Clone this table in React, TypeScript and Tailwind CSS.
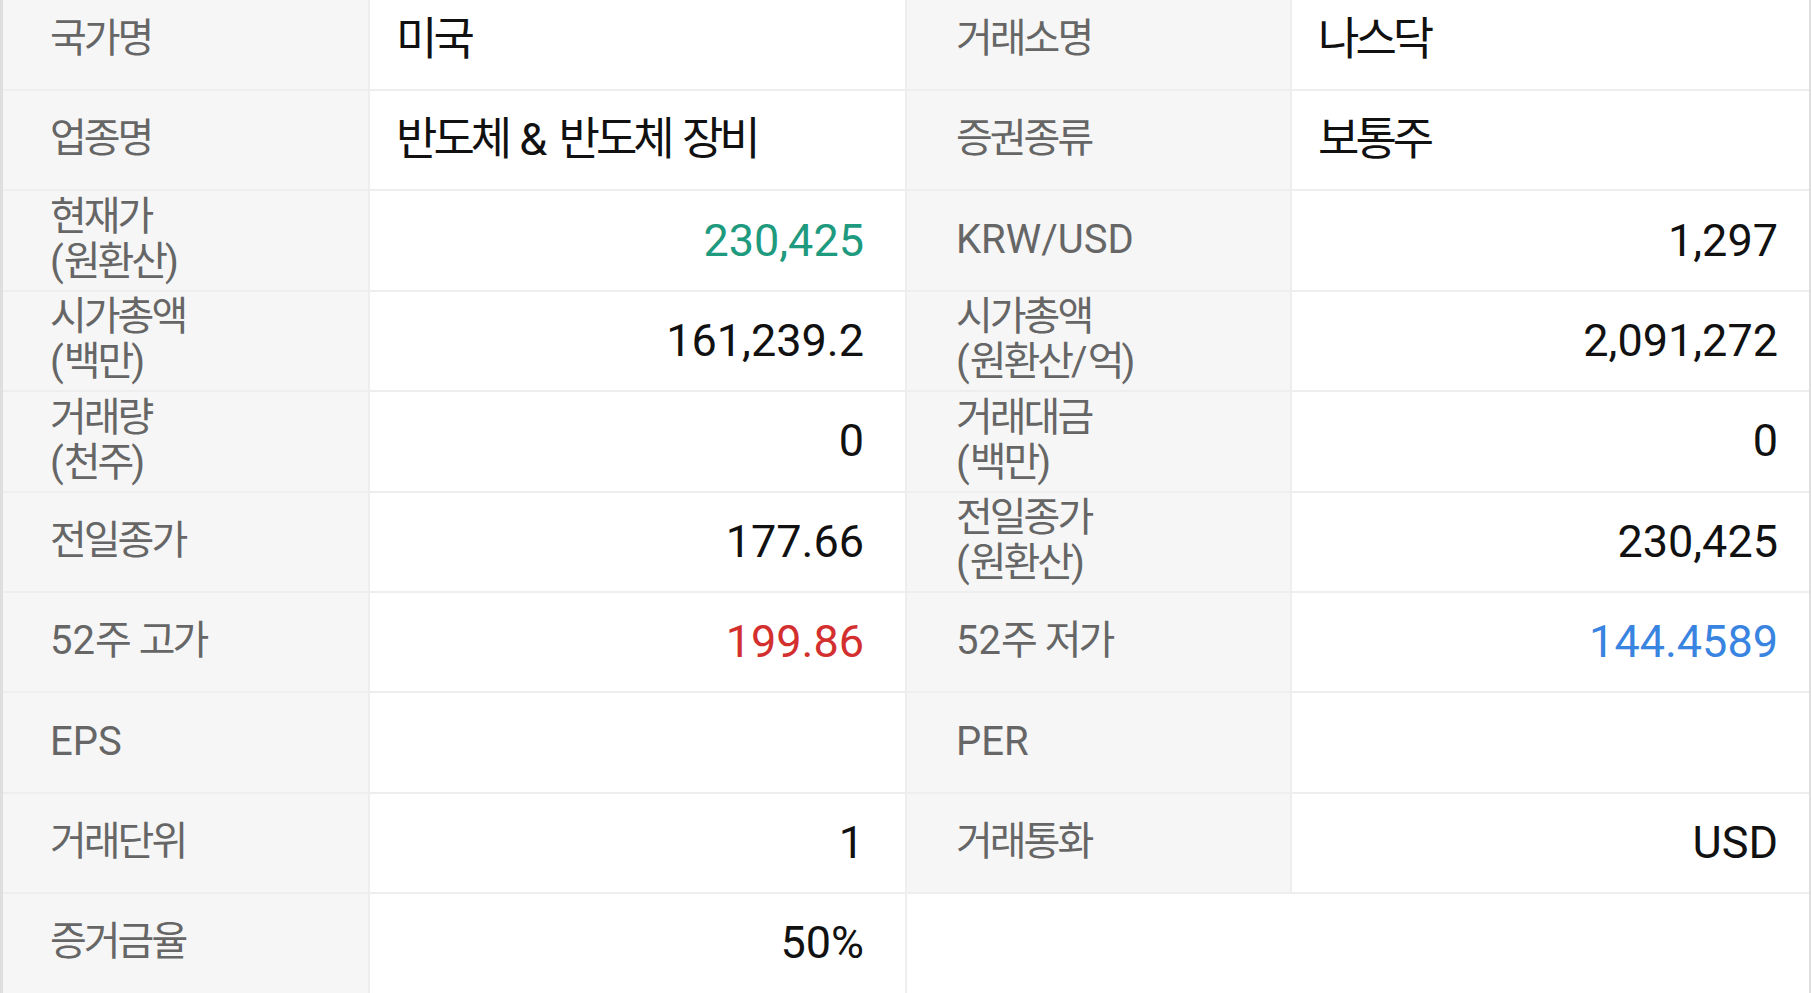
import React from "react";

type Cell = { label: string; value?: string; color?: string; align?: "left" | "right" };

const rows: [Cell, Cell | null][] = [
  [{ label: "국가명", value: "미국", align: "left" }, { label: "거래소명", value: "나스닥", align: "left" }],
  [{ label: "업종명", value: "반도체 & 반도체 장비", align: "left" }, { label: "증권종류", value: "보통주", align: "left" }],
  [{ label: "현재가\n(원환산)", value: "230,425", color: "text-[#1e9a7e]" }, { label: "KRW/USD", value: "1,297" }],
  [{ label: "시가총액\n(백만)", value: "161,239.2" }, { label: "시가총액\n(원환산/억)", value: "2,091,272" }],
  [{ label: "거래량\n(천주)", value: "0" }, { label: "거래대금\n(백만)", value: "0" }],
  [{ label: "전일종가", value: "177.66" }, { label: "전일종가\n(원환산)", value: "230,425" }],
  [{ label: "52주 고가", value: "199.86", color: "text-[#d32f2f]" }, { label: "52주 저가", value: "144.4589", color: "text-[#3884e0]" }],
  [{ label: "EPS", value: "" }, { label: "PER", value: "" }],
  [{ label: "거래단위", value: "1" }, { label: "거래통화", value: "USD" }],
  [{ label: "증거금율", value: "50%" }, null],
];

const font = { fontFamily: "Roboto, 'Noto Sans CJK KR', sans-serif" };

function Txt({ text, big }: { text: string; big?: boolean }) {
  const lines = text.split("\n");
  return (
    <>
      {lines.map((line, li) => (
        <React.Fragment key={li}>
          {li > 0 && <br />}
          {line.split(/([\uAC00-\uD7A3]+)/).map((part, pi) =>
            /[\uAC00-\uD7A3]/.test(part) ? (
              <span key={pi} className={big ? "tracking-[-4px]" : "tracking-[-3px]"}>
                {part}
              </span>
            ) : (
              <React.Fragment key={pi}>{part}</React.Fragment>
            )
          )}
        </React.Fragment>
      ))}
    </>
  );
}

export default function App() {
  return (
    <div className="w-[1811px] h-[993px] overflow-hidden bg-white" style={font}>
      <div className="-mt-[9.4px] border-l-[3px] border-r-[2px] border-[#dedede] flex flex-col">
        {rows.map(([a, b], i) => (
          <div
            key={i}
            className={`flex h-[100.4px] border-b-2 ${i === rows.length - 1 ? "border-[#e2e2e2]" : "border-[#eeeeee]"}`}
          >
            <div className="w-[367px] shrink-0 bg-[#f6f6f6] border-r-2 border-[#eeeeee] flex items-center pl-[47px] text-[40px] leading-[45px] text-[#666666]">
              <div className="-mt-[3px]">
                <Txt text={a.label} />
              </div>
            </div>
            <div
              className={`w-[537px] shrink-0 border-r-2 border-[#eeeeee] flex items-center text-[45px] leading-[50px] ${
                a.align === "left" ? "justify-start pl-[26px]" : "justify-end pr-[41px]"
              } ${a.color ?? "text-[#111111]"}`}
            >
              <div>
                <Txt text={a.value ?? ""} big />
              </div>
            </div>
            {b ? (
              <>
                <div className="w-[385px] shrink-0 bg-[#f6f6f6] border-r-2 border-[#eeeeee] flex items-center pl-[49px] text-[40px] leading-[45px] text-[#666666]">
                  <div className="-mt-[3px]">
                    <Txt text={b.label} />
                  </div>
                </div>
                <div
                  className={`flex-1 flex items-center text-[45px] leading-[50px] ${
                    b.align === "left" ? "justify-start pl-[26px]" : "justify-end pr-[31px]"
                  } ${b.color ?? "text-[#111111]"}`}
                >
                  <div>
                    <Txt text={b.value ?? ""} big />
                  </div>
                </div>
              </>
            ) : (
              <div className="flex-1 bg-white" />
            )}
          </div>
        ))}
      </div>
    </div>
  );
}
